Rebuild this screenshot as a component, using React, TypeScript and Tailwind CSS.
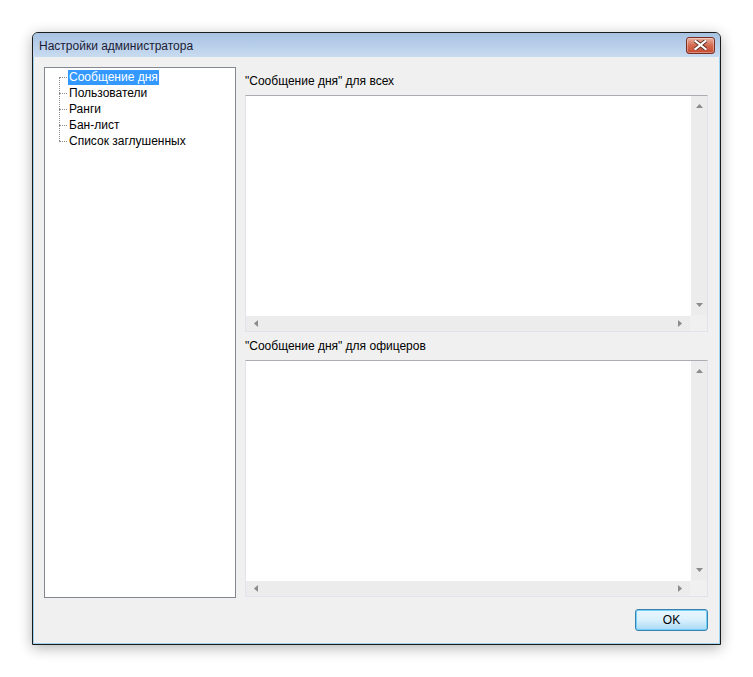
import React from "react";

const items = ["Сообщение дня", "Пользователи", "Ранги", "Бан-лист", "Список заглушенных"];

const font = { fontFamily: '"Liberation Sans", "Segoe UI", sans-serif' };

function Tri({ dir }: { dir: "up" | "down" | "left" | "right" }) {
  const pts = {
    up: "0,4 3.5,0 7,4",
    down: "0,0 3.5,4 7,0",
    left: "4,0 0,3.5 4,7",
    right: "0,0 4,3.5 0,7",
  }[dir];
  const vert = dir === "up" || dir === "down";
  return (
    <svg width={vert ? 7 : 4} height={vert ? 4 : 7} viewBox={vert ? "0 0 7 4" : "0 0 4 7"}>
      <polygon points={pts} fill="#8b8b8b" />
    </svg>
  );
}

function Memo() {
  return (
    <div className="flex h-[237px] flex-col border border-[#e2e3ea] border-t-[#abadb3] bg-white">
      <div className="flex flex-1">
        <div className="flex-1" />
        <div className="flex w-[17px] flex-col items-center justify-between border-l border-white bg-[#ececec] py-[8px]">
          <Tri dir="up" />
          <Tri dir="down" />
        </div>
      </div>
      <div className="flex h-[16px]">
        <div className="flex flex-1 items-center justify-between border-t border-white bg-[#ececec] px-[8px]">
          <Tri dir="left" />
          <Tri dir="right" />
        </div>
        <div className="w-[17px] bg-[#f0f0f0]" />
      </div>
    </div>
  );
}

export default function App() {
  return (
    <div className="h-[677px] w-[753px] overflow-hidden bg-white pl-[32px] pt-[32px] text-[12px] text-black" style={font}>
      <div className="flex h-[613px] w-[689px] flex-col overflow-hidden rounded-t-[6px] border border-[#1c1c1c] bg-[#bcd3ec] shadow-[0_3px_14px_rgba(0,0,0,0.3)]">
        {/* title bar */}
        <div className="flex h-[24px] items-center justify-between bg-gradient-to-b from-[#a7c2e3] to-[#c8dbf0] pl-[6px] pr-[5px]">
          <span className="pt-[2px] text-[12px] text-[#1b1b35]">Настройки администратора</span>
          <div className="flex h-[17px] w-[29px] items-center justify-center rounded-[3px] border border-[#7a2e22] bg-gradient-to-b from-[#eab0a0] via-[#d46a50] to-[#c44a30] shadow-[inset_0_0_0_1px_rgba(255,255,255,0.35)]">
            <svg width="13" height="10" viewBox="0 0 13 10">
              <path d="M1.5 1 L11.5 9 M11.5 1 L1.5 9" stroke="#5a2a22" strokeWidth="4" strokeLinecap="square" />
              <path d="M1.5 1 L11.5 9 M11.5 1 L1.5 9" stroke="#ffffff" strokeWidth="2.2" strokeLinecap="square" />
            </svg>
          </div>
        </div>
        {/* client area */}
        <div className="flex flex-1 flex-col border border-t-0 border-[#9fd4f0] bg-[#f0f0f0] pl-[10px] pr-[9px] pb-[10px] pt-[10px]">
          <div className="flex gap-[9px]">
            <div className="h-[531px] w-[192px] border border-[#828790] bg-white pl-[23px] pt-[1px]">
              <div className="relative">
                <div className="absolute left-[-9px] top-[8px] h-[64px] border-l border-dotted border-[#8c8c8c]" />
                {items.map((t, i) => (
                  <div key={t} className="relative flex h-[16px] items-center">
                    <div className="absolute left-[-9px] top-[8px] w-[8px] border-t border-dotted border-[#8c8c8c]" />
                    <span className={i === 0 ? "bg-[#3399ff] px-[1px] leading-[15px] text-white" : "px-[1px] leading-[15px]"}>{t}</span>
                  </div>
                ))}
              </div>
            </div>
            <div className="flex w-[463px] flex-col">
              <div className="flex h-[28px] items-center">"Сообщение дня" для всех</div>
              <Memo />
              <div className="flex h-[28px] items-center">"Сообщение дня" для офицеров</div>
              <Memo />
            </div>
          </div>
          <div className="mt-[11px] flex justify-end pr-[2px]">
            <button className="flex h-[22px] w-[73px] items-center justify-center rounded-[3px] border border-[#3c7fb1] bg-gradient-to-b from-[#eaf6fd] via-[#d9f0fc] to-[#a7d9f5] text-[12px] text-black shadow-[inset_0_0_0_1px_#6fd3f7]">
              OK
            </button>
          </div>
        </div>
      </div>
    </div>
  );
}
